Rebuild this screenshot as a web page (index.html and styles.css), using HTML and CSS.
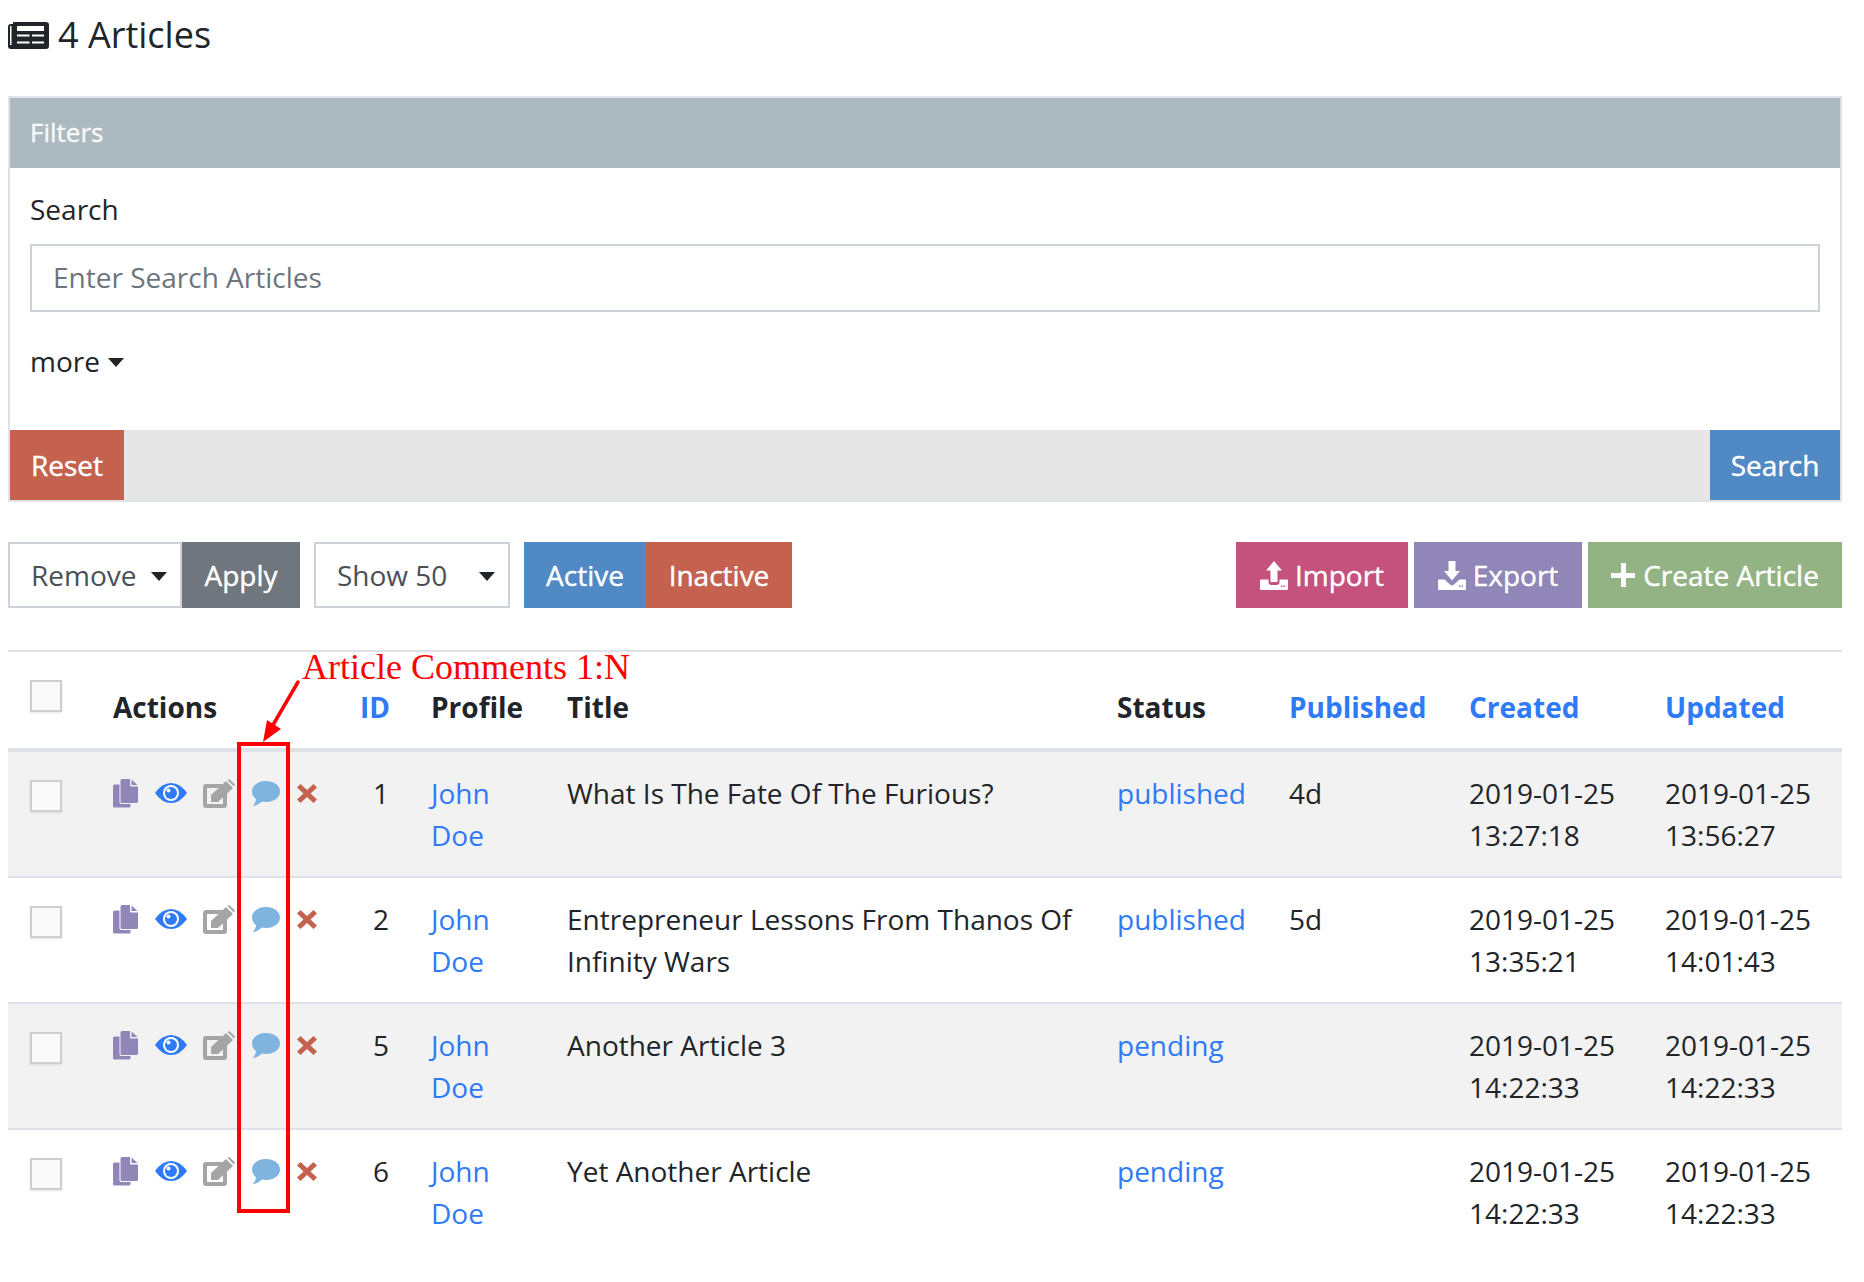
FILE: index.html
```html
<!DOCTYPE html>
<html lang="en">
<head>
    <meta charset="UTF-8">
    <meta name="viewport" content="width=device-width, initial-scale=1.0">
    <title>Articles</title>
    <link rel="stylesheet" href="styles.css">
</head>
<body>
    <svg class="icon-defs" width="0" height="0">
        <symbol id="i-copy" viewBox="0 0 25 29">
            <path d="M1.5 5.5h5v17.5q0 2 2 2h9v2q0 1.500-1.500 1.500H1.500Q0 28.500 0 27V7q0-1.500 1.500-1.500z"/>
            <path d="M9 0h8v6.500q0 1 1 1h7v15q0 1.500-1.500 1.500H9q-1.500 0-1.500-1.500v-21Q7.500 0 9 0z"/>
            <path d="M18.500 0.500 24.500 6h-6z"/>
        </symbol>
        <symbol id="i-eye" viewBox="0 0 32 20">
            <path d="M0 10Q7 0 16 0t16 10q-7 10-16 10T0 10z"/>
            <circle cx="16" cy="10" r="8" fill="#fff"/>
            <circle cx="16" cy="10" r="6"/>
            <circle cx="13.500" cy="7.500" r="2" fill="#fff"/>
        </symbol>
        <symbol id="i-edit" viewBox="0 0 32 29">
            <path d="M3 5h17l-4 4H4.500q-.5 0-.5.500v15q0 .5.500.5h15q.5 0 .5-.5V17l4-4v13q0 3-3 3H3q-3 0-3-3V8q0-3 3-3z"/>
            <path d="M8 16 23 2l7 7-15 14H8z"/>
            <path d="M24.500 1l.8-.6q.8-.6 1.500 0l4.700 4.500q.6.800 0 1.500l-.8.800z"/>
        </symbol>
        <symbol id="i-comment" viewBox="0 0 28 25">
            <path d="M14 0c8 0 14 4.500 14 10.500S22 21 14 21c-1.500 0-3-.2-4.200-.5C7.500 23 4 25 .5 25c1.800-1.500 3.200-4 3.500-6.800C1.500 16.200 0 13.500 0 10.500 0 4.500 6 0 14 0z"/>
        </symbol>
        <symbol id="i-times" viewBox="0 0 20 19">
            <path d="M3.500 0 10 6l6.500-6L20 3.500 13.500 9.500 20 15.500 16.500 19 10 13l-6.500 6L0 15.500 6.500 9.500 0 3.500z"/>
        </symbol>
        <symbol id="i-upload" viewBox="0 0 28 29">
            <path d="M14 0l8 9.500h-4.500V21h-7V9.500H6z"/>
            <path fill-rule="evenodd" d="M1 18.500h7.500V21q0 3 3 3h5q3 0 3-3v-2.500H27q1 0 1 1V28q0 1-1 1H1q-1 0-1-1v-8.500q0-1 1-1zM21 24.500V26h1.500v-1.500zm2.500 0V26H25v-1.500z"/>
        </symbol>
        <symbol id="i-download" viewBox="0 0 28 29">
            <path d="M10.500 0h7v10H22l-8 9.500-8-9.500h4.500z"/>
            <path fill-rule="evenodd" d="M1 18.500h5.500l5.500 5q2 2 4 0l5.500-5H27q1 0 1 1V28q0 1-1 1H1q-1 0-1-1v-8.500q0-1 1-1zM21 24.500V26h1.500v-1.500zm2.500 0V26H25v-1.500z"/>
        </symbol>
        <symbol id="i-news" viewBox="0 0 41 27">
            <path fill-rule="evenodd" d="M5 0h33q3 0 3 3v21q0 3-3 3H3q-3 0-3-3V5q0-3 3-3h2zM2 4v19h1.500V4zm7 0v5h27V4zm0 8.500v2h12.500v-2zm15 0v2h12v-2zm-15 7v2h12.500v-2zm15 0v2h12v-2z"/>
        </symbol>
    </svg>

    <div class="page">
        <h1 class="page-title">
            <svg class="news-icon"><use href="#i-news"/></svg>
            4 Articles
        </h1>

        <section class="filters">
            <div class="filters-header">Filters</div>
            <div class="filters-body">
                <label class="search-label" for="search">Search</label>
                <input class="search-input" id="search" type="text" placeholder="Enter Search Articles">
                <div class="more-link">more <span class="caret"></span></div>
            </div>
            <div class="filters-footer">
                <button class="btn btn-red" type="button">Reset</button>
                <button class="btn btn-blue search-btn" type="button">Search</button>
            </div>
        </section>

        <div class="toolbar">
            <div class="select-box remove-select">Remove<span class="caret"></span></div>
            <button class="btn btn-gray apply-btn" type="button">Apply</button>
            <div class="select-box show-select">Show 50<span class="caret"></span></div>
            <div class="btn-pair">
                <button class="btn btn-blue active-btn" type="button">Active</button>
                <button class="btn btn-red inactive-btn" type="button">Inactive</button>
            </div>
            <div class="toolbar-right">
                <button class="btn btn-pink import-btn" type="button"><svg class="btn-icon"><use href="#i-upload"/></svg>Import</button>
                <button class="btn btn-purple export-btn" type="button"><svg class="btn-icon"><use href="#i-download"/></svg>Export</button>
                <button class="btn btn-green create-btn" type="button"><span class="plus"></span>Create Article</button>
            </div>
        </div>

        <table class="articles">
            <colgroup>
                <col class="col-check"><col class="col-actions"><col class="col-id"><col class="col-profile">
                <col class="col-title"><col class="col-status"><col class="col-published"><col class="col-created"><col class="col-updated">
            </colgroup>
            <thead>
                <tr>
                    <th class="head-check"><input class="check" type="checkbox"></th>
                    <th>Actions</th>
                    <th class="num"><a href="#">ID</a></th>
                    <th>Profile</th>
                    <th>Title</th>
                    <th>Status</th>
                    <th><a href="#">Published</a></th>
                    <th><a href="#">Created</a></th>
                    <th><a href="#">Updated</a></th>
                </tr>
            </thead>
            <tbody>
                <tr>
                    <td><input class="check" type="checkbox"></td>
                    <td>
                        <div class="actions">
                            <svg class="a-copy"><use href="#i-copy"/></svg>
                            <svg class="a-eye"><use href="#i-eye"/></svg>
                            <svg class="a-edit"><use href="#i-edit"/></svg>
                            <svg class="a-comment"><use href="#i-comment"/></svg>
                            <svg class="a-times"><use href="#i-times"/></svg>
                        </div>
                    </td>
                    <td class="num">1</td>
                    <td><a href="#">John Doe</a></td>
                    <td>What Is The Fate Of The Furious?</td>
                    <td><a href="#">published</a></td>
                    <td>4d</td>
                    <td>2019-01-25 13:27:18</td>
                    <td>2019-01-25 13:56:27</td>
                </tr>
                <tr>
                    <td><input class="check" type="checkbox"></td>
                    <td>
                        <div class="actions">
                            <svg class="a-copy"><use href="#i-copy"/></svg>
                            <svg class="a-eye"><use href="#i-eye"/></svg>
                            <svg class="a-edit"><use href="#i-edit"/></svg>
                            <svg class="a-comment"><use href="#i-comment"/></svg>
                            <svg class="a-times"><use href="#i-times"/></svg>
                        </div>
                    </td>
                    <td class="num">2</td>
                    <td><a href="#">John Doe</a></td>
                    <td>Entrepreneur Lessons From Thanos Of Infinity Wars</td>
                    <td><a href="#">published</a></td>
                    <td>5d</td>
                    <td>2019-01-25 13:35:21</td>
                    <td>2019-01-25 14:01:43</td>
                </tr>
                <tr>
                    <td><input class="check" type="checkbox"></td>
                    <td>
                        <div class="actions">
                            <svg class="a-copy"><use href="#i-copy"/></svg>
                            <svg class="a-eye"><use href="#i-eye"/></svg>
                            <svg class="a-edit"><use href="#i-edit"/></svg>
                            <svg class="a-comment"><use href="#i-comment"/></svg>
                            <svg class="a-times"><use href="#i-times"/></svg>
                        </div>
                    </td>
                    <td class="num">5</td>
                    <td><a href="#">John Doe</a></td>
                    <td>Another Article 3</td>
                    <td><a href="#">pending</a></td>
                    <td></td>
                    <td>2019-01-25 14:22:33</td>
                    <td>2019-01-25 14:22:33</td>
                </tr>
                <tr>
                    <td><input class="check" type="checkbox"></td>
                    <td>
                        <div class="actions">
                            <svg class="a-copy"><use href="#i-copy"/></svg>
                            <svg class="a-eye"><use href="#i-eye"/></svg>
                            <svg class="a-edit"><use href="#i-edit"/></svg>
                            <svg class="a-comment"><use href="#i-comment"/></svg>
                            <svg class="a-times"><use href="#i-times"/></svg>
                        </div>
                    </td>
                    <td class="num">6</td>
                    <td><a href="#">John Doe</a></td>
                    <td>Yet Another Article</td>
                    <td><a href="#">pending</a></td>
                    <td></td>
                    <td>2019-01-25 14:22:33</td>
                    <td>2019-01-25 14:22:33</td>
                </tr>
            </tbody>
        </table>

        <!-- red annotation drawn over the screenshot -->
        <span class="note-text">Article Comments 1:N</span>
        <svg class="note-arrow" width="60" height="70" viewBox="0 0 60 70">
            <path d="M38 5 13 48" stroke="#f00" stroke-width="3.500" stroke-linecap="round" fill="none"/>
            <path d="M3 65 7 43 21 52z" fill="#f00"/>
        </svg>
        <div class="note-box"></div>
    </div>
</body>
</html>
```

FILE: styles.css
```css
body {
    margin: 0;
    background-color: #fff;
    color: #212529;
    font-family: "Open Sans", sans-serif;
    font-size: 28px;
    line-height: 42px;
}

a {
    color: #2f7af7;
    text-decoration: none;
}

.icon-defs {
    position: absolute;
}

.page {
    position: relative;
    width: 1834px;
    margin-left: 8px;
}

.page-title {
    display: flex;
    align-items: center;
    gap: 9px;
    height: 70px;
    margin: 0 0 26px;
    font-size: 36px;
    font-weight: 400;
    line-height: 70px;
}

.news-icon {
    width: 41px;
    height: 27px;
    fill: #212529;
}

/* filters card */
.filters {
    border: 2px solid #dfe3e5;
    margin-bottom: 40px;
}

.filters-header {
    height: 70px;
    padding: 0 20px;
    background-color: #adb9c0;
    color: rgba(255, 255, 255, 0.9);
    font-size: 26px;
    line-height: 68px;
    -webkit-text-stroke: 0.4px rgba(255, 255, 255, 0.9);
}

.filters-body {
    height: 262px;
    padding: 20px 20px 0;
    box-sizing: border-box;
}

.search-label {
    display: block;
    margin-bottom: 14px;
}

.search-input {
    display: block;
    width: 100%;
    height: 68px;
    padding: 0 21px 2px;
    box-sizing: border-box;
    border: 2px solid #cdd3d8;
    color: #495057;
    font-family: inherit;
    font-size: 28px;
    outline: none;
}

.search-input::placeholder {
    color: #6c757d;
    opacity: 1;
}

.more-link {
    display: flex;
    align-items: center;
    gap: 8px;
    margin-top: 28px;
}

.caret {
    display: inline-block;
    width: 0;
    height: 0;
    margin-top: 2px;
    border-top: 9px solid #212529;
    border-left: 8px solid transparent;
    border-right: 8px solid transparent;
}

.filters-footer {
    display: flex;
    justify-content: space-between;
    height: 70px;
    background-color: #e6e6e6;
}

/* buttons */
.btn {
    display: flex;
    align-items: center;
    justify-content: center;
    padding: 0 21px;
    border: none;
    color: #fff;
    font-family: inherit;
    font-size: 28px;
    line-height: 42px;
    cursor: pointer;
    -webkit-text-stroke: 0.4px #fff;
}

.btn-red { background-color: #c4624f; }
.btn-blue { background-color: #5189c4; }
.btn-gray { background-color: #6f767e; }
.btn-pink { background-color: #c4527c; }
.btn-purple { background-color: #9186b8; }
.btn-green { background-color: #93b384; }

.search-btn { width: 130px; padding: 0; }
.apply-btn { width: 118px; }
.active-btn { width: 122px; }
.inactive-btn { width: 146px; }
.import-btn { width: 172px; }
.export-btn { width: 168px; }
.create-btn { width: 254px; }

.btn-icon {
    width: 28px;
    height: 29px;
    margin-right: 7px;
    fill: #fff;
}

.plus {
    width: 24px;
    height: 24px;
    margin-right: 8px;
    background:
        linear-gradient(#fff, #fff) center / 100% 5px no-repeat,
        linear-gradient(#fff, #fff) center / 5px 100% no-repeat;
}

/* toolbar */
.toolbar {
    display: flex;
    align-items: stretch;
    height: 66px;
    margin-bottom: 42px;
}

.select-box {
    display: flex;
    align-items: center;
    justify-content: space-between;
    padding: 0 13px 0 21px;
    box-sizing: border-box;
    border: 2px solid #cdd3d8;
    color: #495057;
    line-height: 42px;
}

.remove-select {
    width: 174px;
}

.show-select {
    width: 196px;
    margin-left: 14px;
}

.btn-pair {
    display: flex;
    margin-left: 14px;
}

.toolbar-right {
    display: flex;
    gap: 6px;
    margin-left: auto;
}

.toolbar-right .btn {
    padding: 0;
}

/* table */
.articles {
    width: 100%;
    table-layout: fixed;
    border-collapse: separate;
    border-spacing: 0;
}

.col-check { width: 84px; }
.col-actions { width: 247px; }
.col-id { width: 71px; }
.col-profile { width: 136px; }
.col-title { width: 550px; }
.col-status { width: 172px; }
.col-published { width: 180px; }
.col-created { width: 196px; }
.col-updated { width: 198px; }

.articles th {
    height: 54px;
    padding: 22px 21px 20px;
    border-top: 2px solid #dee2e6;
    border-bottom: 4px solid #dee2e6;
    font-weight: 700;
    text-align: left;
    vertical-align: bottom;
}

.articles th.head-check {
    padding-top: 21px;
    vertical-align: top;
}

.articles th.num {
    padding-right: 23px;
}

.articles td {
    padding: 20px 21px 20px;
    border-bottom: 2px solid #dee2e6;
    vertical-align: top;
}

.articles tbody tr:nth-child(odd) td {
    background-color: #f2f2f2;
}

.articles tbody tr:last-child td {
    border-bottom: none;
}

.articles .num {
    text-align: right;
}

.check {
    display: block;
    width: 32px;
    height: 32px;
    margin: 8px 0 0 1px;
    box-sizing: border-box;
    border: 2px solid #cfcfcf;
    background-color: #fafafa;
    box-shadow: 0 1px 2px rgba(0, 0, 0, 0.1);
    appearance: none;
}

.head-check .check {
    margin-top: 7px;
}

.actions {
    display: flex;
    align-items: center;
    gap: 17px;
    height: 42px;
}

.a-copy { width: 25px; height: 29px; fill: #9186b8; }
.a-eye { width: 32px; height: 20px; fill: #2f7af7; }
.a-edit { width: 32px; height: 29px; fill: #a5a5a5; margin-left: -1px; }
.a-comment { width: 28px; height: 25px; fill: #7fb4df; }
.a-times { width: 20px; height: 19px; fill: #c4624f; }

/* annotation */
.note-text {
    position: absolute;
    top: 646px;
    left: 294px;
    color: #f00;
    font-family: "Liberation Serif", serif;
    font-size: 36px;
    line-height: 42px;
    white-space: nowrap;
}

.note-arrow {
    position: absolute;
    top: 677px;
    left: 252px;
}

.note-box {
    position: absolute;
    top: 742px;
    left: 229px;
    width: 53px;
    height: 471px;
    box-sizing: border-box;
    border: 4px solid #f00;
}
```
